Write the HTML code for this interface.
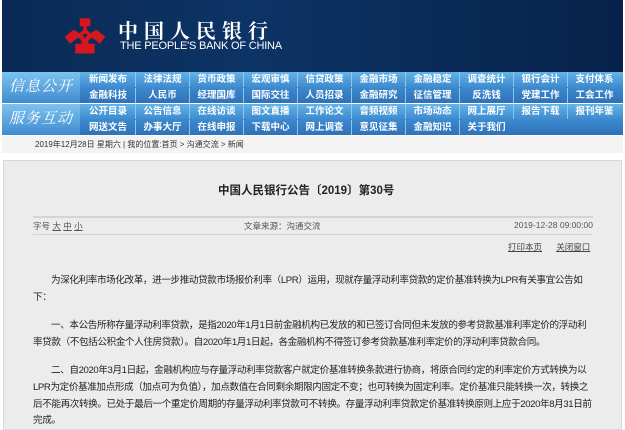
<!DOCTYPE html>
<html><head><meta charset="utf-8"><style>
*{margin:0;padding:0;box-sizing:border-box}
body{width:625px;height:424px;overflow:hidden;background:#fff;font-family:"Liberation Sans","Noto Sans CJK SC",sans-serif;position:relative}
.hdr{position:absolute;left:2px;top:0;width:621px;height:72px;background:linear-gradient(90deg,#0a2a55 0%,#0d3466 40%,#0a2b58 70%,#07224a 100%)}
.nav{position:absolute;left:2px;top:72px;width:621px;height:64px}
.blk{position:absolute;left:0;width:621px;height:31px;background:linear-gradient(#63b3e8,#3a86cc 55%,#2f72b8)}
.lbl{position:absolute;left:0;top:0;width:78px;height:31px;background:linear-gradient(#7cc3ef,#3f8bd0);color:#fff;font-style:italic;font-size:15px;line-height:31px;text-align:center;font-family:"Liberation Serif","Noto Serif CJK SC",serif;letter-spacing:1px}
.it{position:absolute;width:54px;height:15px;color:#fff;font-size:9.5px;font-weight:bold;line-height:15px;text-align:center;border-left:1px solid #8cc6ee;white-space:nowrap;overflow:hidden}
.bc{position:absolute;left:2px;top:136px;width:621px;height:17px;background:#f3f3f3;font-size:8px;color:#333;line-height:17px;padding-left:33px}
.box{position:absolute;left:3px;top:160px;width:619px;height:270px;background:#ececec;border:1px solid #d8d8d8}
.t{position:absolute;font-size:11px;color:#222;white-space:nowrap}
.p{position:absolute;left:33px;font-size:9.6px;letter-spacing:-0.4px;color:#222;white-space:nowrap}
</style></head><body>
<div class="hdr">
<svg style="position:absolute;left:61px;top:15px" width="44" height="40" viewBox="0 0 50 42">
<path fill="#d6171e" d="M19 2h12v9h-4v4l4 4 7-4 10 8-6 8-9-7-4 3v4h7v11H14V31h7v-4l-4-3-9 7-6-8 10-8 7 4 4-4v-4h-4z"/>
<path fill="#0b2d5c" d="M22 20h6l-3 5z"/>
</svg>
<div style="position:absolute;left:116px;top:15px;color:#fff;font-size:20px;font-weight:bold;letter-spacing:6px;font-family:'Liberation Serif','Noto Serif CJK SC',serif">中国人民银行</div>
<div style="position:absolute;left:118px;top:40px;color:#fff;font-size:11px;letter-spacing:-0.2px">THE PEOPLE'S BANK OF CHINA</div>
</div>
<div class="nav">
<div class="blk" style="top:0"><div class="lbl">信息公开</div>
<div class="it" style="left:79px;top:0;border:0">新闻发布</div><div class="it" style="left:133px;top:0">法律法规</div><div class="it" style="left:187px;top:0">货币政策</div><div class="it" style="left:241px;top:0">宏观审慎</div><div class="it" style="left:295px;top:0">信贷政策</div><div class="it" style="left:349px;top:0">金融市场</div><div class="it" style="left:403px;top:0">金融稳定</div><div class="it" style="left:457px;top:0">调查统计</div><div class="it" style="left:511px;top:0">银行会计</div><div class="it" style="left:565px;top:0">支付体系</div>
<div class="it" style="left:79px;top:16px;border:0">金融科技</div><div class="it" style="left:133px;top:16px">人民币</div><div class="it" style="left:187px;top:16px">经理国库</div><div class="it" style="left:241px;top:16px">国际交往</div><div class="it" style="left:295px;top:16px">人员招录</div><div class="it" style="left:349px;top:16px">金融研究</div><div class="it" style="left:403px;top:16px">征信管理</div><div class="it" style="left:457px;top:16px">反洗钱</div><div class="it" style="left:511px;top:16px">党建工作</div><div class="it" style="left:565px;top:16px">工会工作</div>
</div>
<div class="blk" style="top:32px"><div class="lbl">服务互动</div>
<div class="it" style="left:79px;top:0;border:0">公开目录</div><div class="it" style="left:133px;top:0">公告信息</div><div class="it" style="left:187px;top:0">在线访谈</div><div class="it" style="left:241px;top:0">图文直播</div><div class="it" style="left:295px;top:0">工作论文</div><div class="it" style="left:349px;top:0">音频视频</div><div class="it" style="left:403px;top:0">市场动态</div><div class="it" style="left:457px;top:0">网上展厅</div><div class="it" style="left:511px;top:0">报告下载</div><div class="it" style="left:565px;top:0">报刊年鉴</div>
<div class="it" style="left:79px;top:16px;border:0">网送文告</div><div class="it" style="left:133px;top:16px">办事大厅</div><div class="it" style="left:187px;top:16px">在线申报</div><div class="it" style="left:241px;top:16px">下载中心</div><div class="it" style="left:295px;top:16px">网上调查</div><div class="it" style="left:349px;top:16px">意见征集</div><div class="it" style="left:403px;top:16px">金融知识</div><div class="it" style="left:457px;top:16px">关于我们</div>
</div>
</div>
<div class="bc">2019年12月28日 星期六 | 我的位置:首页 &gt; 沟通交流 &gt; 新闻</div>
<div class="box"></div>
<div class="t" style="left:218px;top:182px;font-weight:bold;font-size:11.5px">中国人民银行公告〔2019〕第30号</div>
<div style="position:absolute;left:33px;top:216px;width:560px;border-top:2px solid #d4d4d4"></div>
<div class="t" style="left:33px;top:220px;font-size:8.5px;color:#555">字号 <u>大</u> <u>中</u> <u>小</u></div>
<div class="t" style="left:244px;top:220px;font-size:8.5px;color:#555">文章来源：沟通交流</div>
<div class="t" style="left:514px;top:220px;font-size:8.5px;color:#555">2019-12-28 09:00:00</div>
<div style="position:absolute;left:33px;top:234px;width:560px;border-top:1px solid #d4d4d4"></div>
<div class="t" style="left:508px;top:241px;font-size:8.5px;color:#444"><u>打印本页</u>&nbsp;&nbsp;&nbsp;&nbsp;&nbsp;&nbsp;<u>关闭窗口</u></div>
<div class="p" style="top:272px;left:51px">为深化利率市场化改革，进一步推动贷款市场报价利率（LPR）运用，现就存量浮动利率贷款的定价基准转换为LPR有关事宜公告如</div>
<div class="p" style="top:289px">下：</div>
<div class="p" style="top:317px;left:51px">一、本公告所称存量浮动利率贷款，是指2020年1月1日前金融机构已发放的和已签订合同但未发放的参考贷款基准利率定价的浮动利</div>
<div class="p" style="top:334px">率贷款（不包括公积金个人住房贷款）。自2020年1月1日起，各金融机构不得签订参考贷款基准利率定价的浮动利率贷款合同。</div>
<div class="p" style="top:362px;left:51px">二、自2020年3月1日起，金融机构应与存量浮动利率贷款客户就定价基准转换条款进行协商，将原合同约定的利率定价方式转换为以</div>
<div class="p" style="top:379px">LPR为定价基准加点形成（加点可为负值），加点数值在合同剩余期限内固定不变；也可转换为固定利率。定价基准只能转换一次，转换之</div>
<div class="p" style="top:396px">后不能再次转换。已处于最后一个重定价周期的存量浮动利率贷款可不转换。存量浮动利率贷款定价基准转换原则上应于2020年8月31日前</div>
<div class="p" style="top:412px">完成。</div>
</body></html>
